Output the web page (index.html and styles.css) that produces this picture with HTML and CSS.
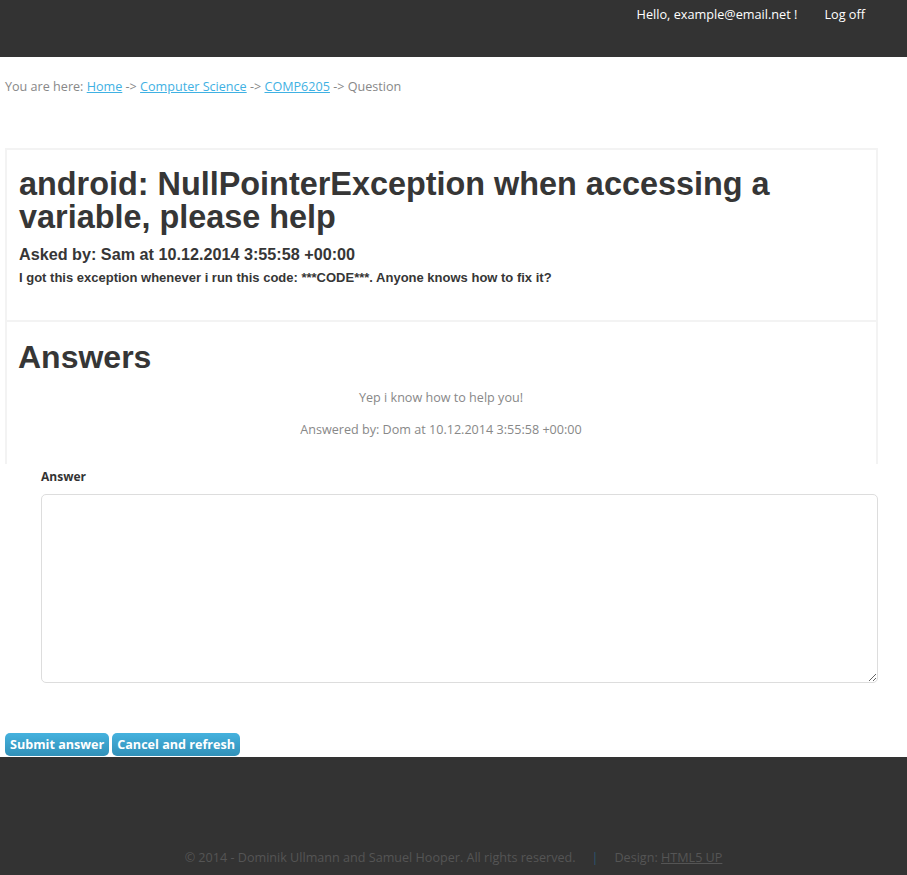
FILE: index.html
```html
<!DOCTYPE html>
<html>
<head>
<meta charset="utf-8">
<link rel="stylesheet" href="styles.css">
</head>
<body>
<header class="topbar">
  <span class="hello">Hello, example@email.net !</span>
  <a class="logoff">Log off</a>
</header>
<main class="main">
  <p class="crumbs">You are here: <a href="#">Home</a> -&gt; <a href="#">Computer Science</a> -&gt; <a href="#">COMP6205</a> -&gt; Question</p>
  <section class="box question">
    <h1 class="qtitle">android: NullPointerException when accessing a variable, please help</h1>
    <h3 class="asked">Asked by: Sam at 10.12.2014 3:55:58 +00:00</h3>
    <p class="qbody">I got this exception whenever i run this code: ***CODE***. Anyone knows how to fix it?</p>
  </section>
  <section class="box answers">
    <h1 class="atitle">Answers</h1>
    <p class="ans">Yep i know how to help you!</p>
    <p class="ans">Answered by: Dom at 10.12.2014 3:55:58 +00:00</p>
  </section>
  <form class="form">
    <label class="label">Answer</label>
    <textarea class="area"></textarea>
    <div class="buttons">
      <button type="button" class="btn">Submit answer</button>
      <button type="button" class="btn">Cancel and refresh</button>
    </div>
  </form>
</main>
<footer class="footer">
  <span>© 2014 - Dominik Ullmann and Samuel Hooper. All rights reserved.</span>
  <span class="sep">|</span>
  <span>Design: <a href="#">HTML5 UP</a></span>
</footer>
</body>
</html>
```
FILE: styles.css
```css
html, body { margin: 0; padding: 0; }
body {
  font-family: "Open Sans", "Liberation Sans", sans-serif;
  font-size: 12.6px;
  color: #888;
  background: #fff;
}
.topbar {
  background: #333;
  height: 57px;
  display: flex;
  justify-content: flex-end;
  align-items: flex-start;
  padding-right: 42px;
  box-sizing: border-box;
  color: #fff;
  font-size: 12.7px;
  line-height: 18px;
  padding-top: 5px;
}
.hello { margin-right: 27px; }
.logoff { color: #fff; }
.main { padding: 0 29px 0 5px; }
.crumbs {
  margin: 0;
  padding-top: 20px;
  line-height: 20px;
  height: 91px;
  box-sizing: border-box;
}
.crumbs a { color: #3fb1e3; text-decoration: underline; }
.box {
  border: 2px solid #f3f3f3;
  border-bottom: none;
  padding: 0 12px;
}
.question { padding-top: 18px; height: 172px; box-sizing: border-box; }
.qtitle {
  font-family: "Liberation Sans", Arial, sans-serif;
  font-weight: bold;
  font-size: 32.4px;
  line-height: 33px;
  color: #363636;
  margin: 0;
}
.asked {
  font-family: "Liberation Sans", Arial, sans-serif;
  font-size: 16.2px;
  line-height: 20px;
  color: #363636;
  margin: 10px 0 0 0;
}
.qbody {
  font-family: "Liberation Sans", Arial, sans-serif;
  font-weight: bold;
  font-size: 13px;
  line-height: 18px;
  color: #363636;
  margin: 5px 0 0 0;
}
.answers { height: 144px; box-sizing: border-box; padding-top: 17px; padding-left: 11px; }
.atitle {
  font-family: "Liberation Sans", Arial, sans-serif;
  font-weight: bold;
  font-size: 32px;
  line-height: 36px;
  color: #363636;
  margin: 0 0 14px 0;
}
.ans { text-align: center; margin: 0 0 14px 0; line-height: 18px; }
.form { padding-left: 36px; display: flex; flex-direction: column; }
.label {
  font-weight: bold;
  font-size: 12px;
  color: #333;
  line-height: 18px;
  margin-top: 4px;
  margin-bottom: 8px;
}
.area {
  height: 189px;
  border: 1px solid #ddd;
  border-radius: 5px;
  box-sizing: border-box;
  resize: vertical;
  font-family: inherit;
}
.buttons {
  margin: 50px 0 0 -36px;
  display: flex;
  gap: 3px;
}
.btn {
  font-family: "Open Sans", sans-serif;
  font-weight: bold;
  font-size: 12.6px;
  color: #fff;
  border: none;
  border-radius: 5px;
  background: linear-gradient(#45b2de, #3190b8);
  height: 23px;
  padding: 0 5px;
  line-height: 23px;
  cursor: pointer;
}
.footer {
  background: #333;
  height: 130px;
  margin-top: 1px;
  color: #555;
  font-size: 12.6px;
  display: flex;
  justify-content: center;
  align-items: flex-start;
  padding-top: 92px;
  box-sizing: border-box;
  gap: 16px;
}
.footer a { color: #555; }
.sep { color: #2c5672; }
```
